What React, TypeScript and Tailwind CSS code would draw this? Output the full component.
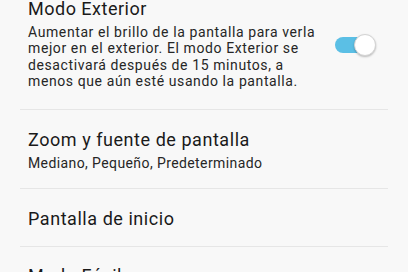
export default function App() {
  return (
    <div
      className="h-[272px] w-[408px] overflow-hidden bg-[#f8f8f8] text-[#1a1a1a]"
      style={{ fontFamily: "Roboto, 'Liberation Sans', sans-serif" }}
    >
      <div className="flex items-center pl-[28px] pr-[37px] pb-[20px]">
        <div className="w-[292px]">
          <div className="text-[18px] leading-[18px] tracking-[0.5px]">Modo Exterior</div>
          <p className="mt-[6px] text-[14px] leading-[16.3px] tracking-[0.6px] text-[#262626]">
            Aumentar el brillo de la pantalla para verla mejor en el exterior. El modo Exterior se
            desactivará después de 15 minutos, a menos que aún esté usando la pantalla.
          </p>
        </div>
        <div className="ml-auto flex items-center">
          <div className="relative h-[16px] w-[36px] rounded-full bg-[#5bbfe5]">
            <div className="absolute -right-[5px] -top-[3px] h-[22px] w-[22px] rounded-full border border-[#d4d4d4] bg-white shadow-[0_1px_2px_rgba(0,0,0,0.25)]" />
          </div>
        </div>
      </div>
      <div className="mx-[20px] h-px bg-[#e6e6e6]" />

      <div className="pl-[28px] pt-[18px] pb-[15px]">
        <div className="text-[18px] leading-[24px] tracking-[0.55px]">Zoom y fuente de pantalla</div>
        <div className="mt-[1px] text-[14px] leading-[20px] tracking-[0.4px] text-[#262626]">
          Mediano, Pequeño, Predeterminado
        </div>
      </div>
      <div className="mx-[20px] h-px bg-[#e6e6e6]" />

      <div className="pl-[28px] pt-[18px] pb-[15px]">
        <div className="text-[18px] leading-[24px] tracking-[0.55px]">Pantalla de inicio</div>
      </div>
      <div className="mx-[20px] h-px bg-[#e6e6e6]" />

      <div className="pl-[28px] pt-[17px] pb-[15px]">
        <div className="text-[18px] leading-[24px] tracking-[0.55px]">Modo Fácil</div>
      </div>
    </div>
  );
}
